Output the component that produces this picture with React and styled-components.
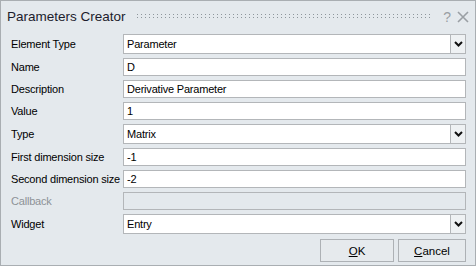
import React from "react";
import styled, { createGlobalStyle } from "styled-components";

const GlobalStyle = createGlobalStyle`
  html, body {
    margin: 0;
    padding: 0;
    background: #e4e9ed;
  }
  * {
    box-sizing: border-box;
  }
`;

// 폼 행 데이터
const rows = [
  { label: "Element Type", value: "Parameter", kind: "select" },
  { label: "Name", value: "D" },
  { label: "Description", value: "Derivative Parameter" },
  { label: "Value", value: "1" },
  { label: "Type", value: "Matrix", kind: "select" },
  { label: "First dimension size", value: "-1" },
  { label: "Second dimension size", value: "-2" },
  { label: "Callback", value: "", disabled: true },
  { label: "Widget", value: "Entry", kind: "select" },
];

const Chevron = () => (
  <svg width="9" height="6" viewBox="0 0 9 6">
    <path d="M1 1 L4.5 4.5 L8 1" fill="none" stroke="#111" strokeWidth="2" />
  </svg>
);

const App = () => {
  return (
    <>
      <GlobalStyle />
      <Window>
        <TitleBar>
          <Title>Parameters Creator</Title>
          <Grip />
          <Help>?</Help>
          <CloseBtn>
            <svg width="12" height="12" viewBox="0 0 12 12">
              <path d="M1 1 L11 11 M11 1 L1 11" stroke="#9a9fa4" strokeWidth="1.6" />
            </svg>
          </CloseBtn>
        </TitleBar>
        <Form>
          {rows.map((row) => (
            <React.Fragment key={row.label}>
              <Label $disabled={row.disabled}>{row.label}</Label>
              {row.kind === "select" ? (
                <SelectBox>
                  <SelectText>{row.value}</SelectText>
                  <DropButton>
                    <Chevron />
                  </DropButton>
                </SelectBox>
              ) : (
                <TextField $disabled={row.disabled}>{row.value}</TextField>
              )}
            </React.Fragment>
          ))}
        </Form>
        <Buttons>
          <Button $w={74}>
            <u>O</u>K
          </Button>
          <Button $w={68}>
            <u>C</u>ancel
          </Button>
        </Buttons>
      </Window>
    </>
  );
};

const Window = styled.div`
  width: 476px;
  height: 266px;
  border: 1px solid #a9aeb2;
  background: #e4e9ed;
  font-family: "Liberation Sans", Arial, sans-serif;
  display: flex;
  flex-direction: column;
`;
const TitleBar = styled.div`
  height: 32px;
  display: flex;
  align-items: center;
  padding: 0 6px 1px 6px;
`;
const Title = styled.div`
  font-size: 13.5px;
  color: #1c1c2c;
  white-space: nowrap;
`;
const Grip = styled.div`
  flex: 1;
  height: 5px;
  margin: 0 12px 0 11px;
  background: repeating-linear-gradient(to bottom, #8e969c 0 1px, transparent 1px 3px);
  -webkit-mask-image: repeating-linear-gradient(to right, #000 0 1px, transparent 1px 4px);
  mask-image: repeating-linear-gradient(to right, #000 0 1px, transparent 1px 4px);
`;
const Help = styled.div`
  font-size: 14px;
  color: #9a9fa4;
  margin-right: 6px;
`;
const CloseBtn = styled.div`
  display: flex;
  align-items: center;
`;
const Form = styled.div`
  display: grid;
  grid-template-columns: 112px 1fr;
  row-gap: 4px;
  padding: 1px 9px 0 10px;
`;
const Label = styled.div`
  font-size: 11px;
  letter-spacing: -0.2px;
  color: ${(p) => (p.$disabled ? "#8d9297" : "#000")};
  display: flex;
  align-items: center;
  white-space: nowrap;
`;
const TextField = styled.div`
  height: 18px;
  border: 1px solid #b3b6b9;
  background: ${(p) => (p.$disabled ? "#e4e9ed" : "#fff")};
  font-size: 11px;
  letter-spacing: -0.2px;
  padding: 0 3px;
  display: flex;
  align-items: center;
`;
const SelectBox = styled.div`
  height: 20px;
  display: flex;
`;
const SelectText = styled.div`
  flex: 1;
  border: 1px solid #b3b6b9;
  background: #fff;
  font-size: 11px;
  letter-spacing: -0.2px;
  padding: 0 3px;
  display: flex;
  align-items: center;
`;
const DropButton = styled.div`
  width: 15px;
  border: 1px solid #b3b6b9;
  border-left: none;
  background: #eef1f3;
  display: flex;
  align-items: center;
  justify-content: center;
`;
const Buttons = styled.div`
  display: flex;
  justify-content: flex-end;
  gap: 4px;
  padding: 5px 9px 0 0;
`;
const Button = styled.div`
  width: ${(p) => p.$w}px;
  height: 23px;
  border: 1px solid #adb1b5;
  background: #e6eaed;
  font-size: 11.5px;
  display: flex;
  align-items: center;
  justify-content: center;
  color: #000;
`;

export default App;
